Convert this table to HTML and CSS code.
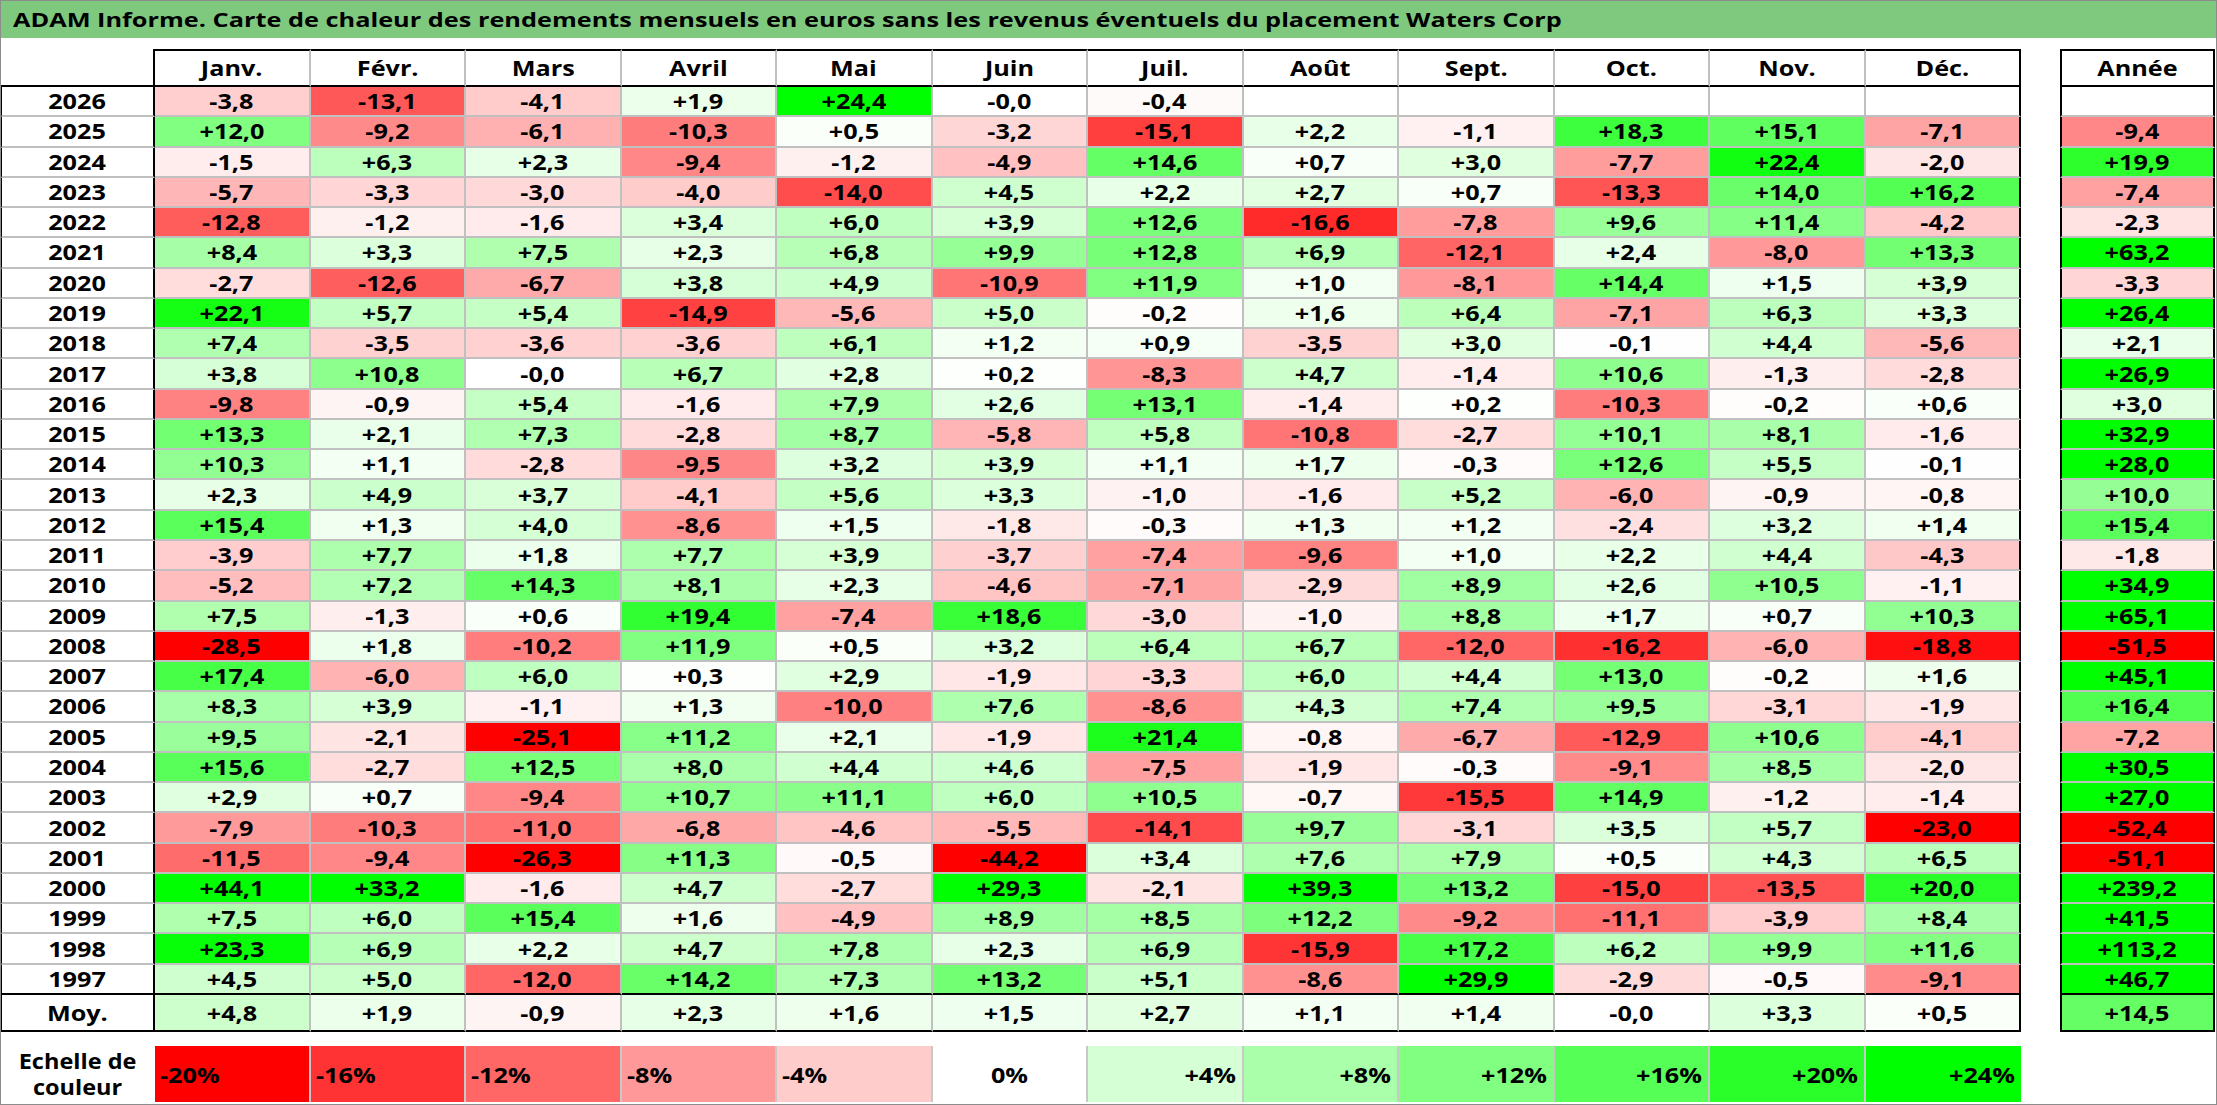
FILE: index.html
```html
<!DOCTYPE html>
<html lang="fr">
<head>
<meta charset="utf-8">
<title>ADAM Informe - Waters Corp</title>
<link rel="stylesheet" href="styles.css">
</head>
<body>
<div class="page">
  <div class="title"><span class="title-text">ADAM Informe. Carte de chaleur des rendements mensuels en euros sans les revenus éventuels du placement Waters Corp</span></div>
  <div class="content">
    <div class="left">
      <div class="grid" id="main"></div>
      <div class="legend" id="legend">
        <div class="legend-label"><span class="sx">Echelle de<br>couleur</span></div>
      </div>
    </div>
    <div class="annual" id="annual"></div>
  </div>
</div>
<script src="script.js"></script>
</body>
</html>
```

FILE: styles.css
```css
* { box-sizing: border-box; }
body {
  margin: 0;
  background: #fff;
  color: #000;
  font-family: "Open Sans", "Liberation Sans", sans-serif;
  font-weight: 700;
}
.page {
  width: 2217px;
  height: 1105px;
  border: 1px solid #8c8c8c;
  overflow: hidden;
}
.title {
  height: 37px;
  background: #7fc97f;
  padding-left: 12px;
  display: flex;
  align-items: center;
  font-size: 20px;
}
.title-text {
  display: inline-block;
  white-space: nowrap;
  transform: scaleX(1.265);
  transform-origin: left center;
}
.content {
  display: flex;
  padding-top: 11px;
}
.left { width: 2020px; }
.grid {
  display: grid;
  grid-template-columns: 154px repeat(12, 155.5px);
  grid-template-rows: 38px repeat(30, 30.28px) 37.5px;
}
.annual {
  width: 155px;
  margin-left: 39px;
  display: grid;
  grid-template-columns: 155px;
  grid-template-rows: 38px repeat(30, 30.28px) 37.5px;
}
.c {
  display: flex;
  align-items: center;
  justify-content: center;
  font-size: 21px;
  white-space: nowrap;
  border-right: 2px solid #c0c0c0;
  border-bottom: 2px solid #c0c0c0;
}
.sx {
  display: inline-block;
  transform: scaleX(1.2);
}
.corner {
  border-right: 2px solid #000;
  border-bottom: 2px solid #000;
}
.hd {
  border-top: 2px solid #000;
  border-bottom: 2px solid #000;
}
.yr {
  border-left: 1px solid #000;
  border-right: 2px solid #000;
}
.last { border-right-color: #000; }
.endrow { border-bottom-color: #000; }
.moy { border-bottom: 2px solid #000; }
.a {
  border-left: 2px solid #000;
  border-right: 2px solid #000;
}
.legend {
  display: flex;
  margin-top: 14px;
  height: 56px;
}
.legend-label {
  width: 154px;
  display: flex;
  align-items: center;
  justify-content: center;
  text-align: center;
  font-size: 21px;
  line-height: 26px;
}
.legend-label .sx { transform: scaleX(1.12); }
.lg {
  width: 155.5px;
  display: flex;
  align-items: center;
  font-size: 21px;
  padding-top: 2px;
  border-right: 2px solid #c8c8c8;
}
.lg:last-child { border-right: none; }
.lg.neg { justify-content: flex-start; padding-left: 5px; }
.lg.neg .sx { transform-origin: left center; }
.lg.zero { justify-content: center; }
.lg.pos { justify-content: flex-end; padding-right: 6px; }
.lg.pos .sx { transform-origin: right center; }
```

FILE: script.js
```js
(function () {
  var months = ["Janv.", "Févr.", "Mars", "Avril", "Mai", "Juin", "Juil.", "Août", "Sept.", "Oct.", "Nov.", "Déc."];
  var rows = [
    "2026;-3,8;-13,1;-4,1;+1,9;+24,4;-0,0;-0,4;;;;;;",
    "2025;+12,0;-9,2;-6,1;-10,3;+0,5;-3,2;-15,1;+2,2;-1,1;+18,3;+15,1;-7,1;-9,4",
    "2024;-1,5;+6,3;+2,3;-9,4;-1,2;-4,9;+14,6;+0,7;+3,0;-7,7;+22,4;-2,0;+19,9",
    "2023;-5,7;-3,3;-3,0;-4,0;-14,0;+4,5;+2,2;+2,7;+0,7;-13,3;+14,0;+16,2;-7,4",
    "2022;-12,8;-1,2;-1,6;+3,4;+6,0;+3,9;+12,6;-16,6;-7,8;+9,6;+11,4;-4,2;-2,3",
    "2021;+8,4;+3,3;+7,5;+2,3;+6,8;+9,9;+12,8;+6,9;-12,1;+2,4;-8,0;+13,3;+63,2",
    "2020;-2,7;-12,6;-6,7;+3,8;+4,9;-10,9;+11,9;+1,0;-8,1;+14,4;+1,5;+3,9;-3,3",
    "2019;+22,1;+5,7;+5,4;-14,9;-5,6;+5,0;-0,2;+1,6;+6,4;-7,1;+6,3;+3,3;+26,4",
    "2018;+7,4;-3,5;-3,6;-3,6;+6,1;+1,2;+0,9;-3,5;+3,0;-0,1;+4,4;-5,6;+2,1",
    "2017;+3,8;+10,8;-0,0;+6,7;+2,8;+0,2;-8,3;+4,7;-1,4;+10,6;-1,3;-2,8;+26,9",
    "2016;-9,8;-0,9;+5,4;-1,6;+7,9;+2,6;+13,1;-1,4;+0,2;-10,3;-0,2;+0,6;+3,0",
    "2015;+13,3;+2,1;+7,3;-2,8;+8,7;-5,8;+5,8;-10,8;-2,7;+10,1;+8,1;-1,6;+32,9",
    "2014;+10,3;+1,1;-2,8;-9,5;+3,2;+3,9;+1,1;+1,7;-0,3;+12,6;+5,5;-0,1;+28,0",
    "2013;+2,3;+4,9;+3,7;-4,1;+5,6;+3,3;-1,0;-1,6;+5,2;-6,0;-0,9;-0,8;+10,0",
    "2012;+15,4;+1,3;+4,0;-8,6;+1,5;-1,8;-0,3;+1,3;+1,2;-2,4;+3,2;+1,4;+15,4",
    "2011;-3,9;+7,7;+1,8;+7,7;+3,9;-3,7;-7,4;-9,6;+1,0;+2,2;+4,4;-4,3;-1,8",
    "2010;-5,2;+7,2;+14,3;+8,1;+2,3;-4,6;-7,1;-2,9;+8,9;+2,6;+10,5;-1,1;+34,9",
    "2009;+7,5;-1,3;+0,6;+19,4;-7,4;+18,6;-3,0;-1,0;+8,8;+1,7;+0,7;+10,3;+65,1",
    "2008;-28,5;+1,8;-10,2;+11,9;+0,5;+3,2;+6,4;+6,7;-12,0;-16,2;-6,0;-18,8;-51,5",
    "2007;+17,4;-6,0;+6,0;+0,3;+2,9;-1,9;-3,3;+6,0;+4,4;+13,0;-0,2;+1,6;+45,1",
    "2006;+8,3;+3,9;-1,1;+1,3;-10,0;+7,6;-8,6;+4,3;+7,4;+9,5;-3,1;-1,9;+16,4",
    "2005;+9,5;-2,1;-25,1;+11,2;+2,1;-1,9;+21,4;-0,8;-6,7;-12,9;+10,6;-4,1;-7,2",
    "2004;+15,6;-2,7;+12,5;+8,0;+4,4;+4,6;-7,5;-1,9;-0,3;-9,1;+8,5;-2,0;+30,5",
    "2003;+2,9;+0,7;-9,4;+10,7;+11,1;+6,0;+10,5;-0,7;-15,5;+14,9;-1,2;-1,4;+27,0",
    "2002;-7,9;-10,3;-11,0;-6,8;-4,6;-5,5;-14,1;+9,7;-3,1;+3,5;+5,7;-23,0;-52,4",
    "2001;-11,5;-9,4;-26,3;+11,3;-0,5;-44,2;+3,4;+7,6;+7,9;+0,5;+4,3;+6,5;-51,1",
    "2000;+44,1;+33,2;-1,6;+4,7;-2,7;+29,3;-2,1;+39,3;+13,2;-15,0;-13,5;+20,0;+239,2",
    "1999;+7,5;+6,0;+15,4;+1,6;-4,9;+8,9;+8,5;+12,2;-9,2;-11,1;-3,9;+8,4;+41,5",
    "1998;+23,3;+6,9;+2,2;+4,7;+7,8;+2,3;+6,9;-15,9;+17,2;+6,2;+9,9;+11,6;+113,2",
    "1997;+4,5;+5,0;-12,0;+14,2;+7,3;+13,2;+5,1;-8,6;+29,9;-2,9;-0,5;-9,1;+46,7",
    "Moy.;+4,8;+1,9;-0,9;+2,3;+1,6;+1,5;+2,7;+1,1;+1,4;-0,0;+3,3;+0,5;+14,5"
  ];

  function color(s) {
    if (!s) return "#ffffff";
    var v = parseFloat(s.replace(",", "."));
    var t, c;
    if (v < 0) {
      t = Math.min(-v / 20, 1);
      c = Math.round(255 * (1 - t));
      return "rgb(255," + c + "," + c + ")";
    }
    t = Math.min(v / 24, 1);
    c = Math.round(255 * (1 - t));
    return "rgb(" + c + ",255," + c + ")";
  }

  function cell(parent, cls, text, bg) {
    var d = document.createElement("div");
    d.className = "c " + cls;
    if (bg) d.style.background = bg;
    if (text) {
      var s = document.createElement("span");
      s.className = "sx";
      s.textContent = text;
      d.appendChild(s);
    }
    parent.appendChild(d);
    return d;
  }

  var main = document.getElementById("main");
  var annual = document.getElementById("annual");

  cell(main, "corner", "");
  months.forEach(function (m, j) {
    cell(main, "hd" + (j === 11 ? " last" : ""), m);
  });
  cell(annual, "a hd", "Année");

  rows.forEach(function (line, i) {
    var f = line.split(";");
    var extra = i === 29 ? " endrow" : (i === 30 ? " moy" : "");
    cell(main, "yr" + extra, f[0]);
    for (var j = 1; j <= 12; j++) {
      cell(main, (j === 12 ? "last" : "") + extra, f[j], color(f[j]));
    }
    cell(annual, "a" + extra, f[13], color(f[13]));
  });

  var legend = document.getElementById("legend");
  for (var k = -20; k <= 24; k += 4) {
    var d = document.createElement("div");
    var cls = k < 0 ? "neg" : (k === 0 ? "zero" : "pos");
    d.className = "lg " + cls;
    var r, g, b, t, c;
    if (k < 0) { t = -k / 20; c = Math.round(255 * (1 - t)); r = 255; g = c; b = c; }
    else { t = k / 24; c = Math.round(255 * (1 - t)); r = c; g = 255; b = c; }
    d.style.background = "rgb(" + r + "," + g + "," + b + ")";
    var s = document.createElement("span");
    s.className = "sx";
    s.textContent = (k > 0 ? "+" : "") + k + "%";
    d.appendChild(s);
    legend.appendChild(d);
  }
})();
```
